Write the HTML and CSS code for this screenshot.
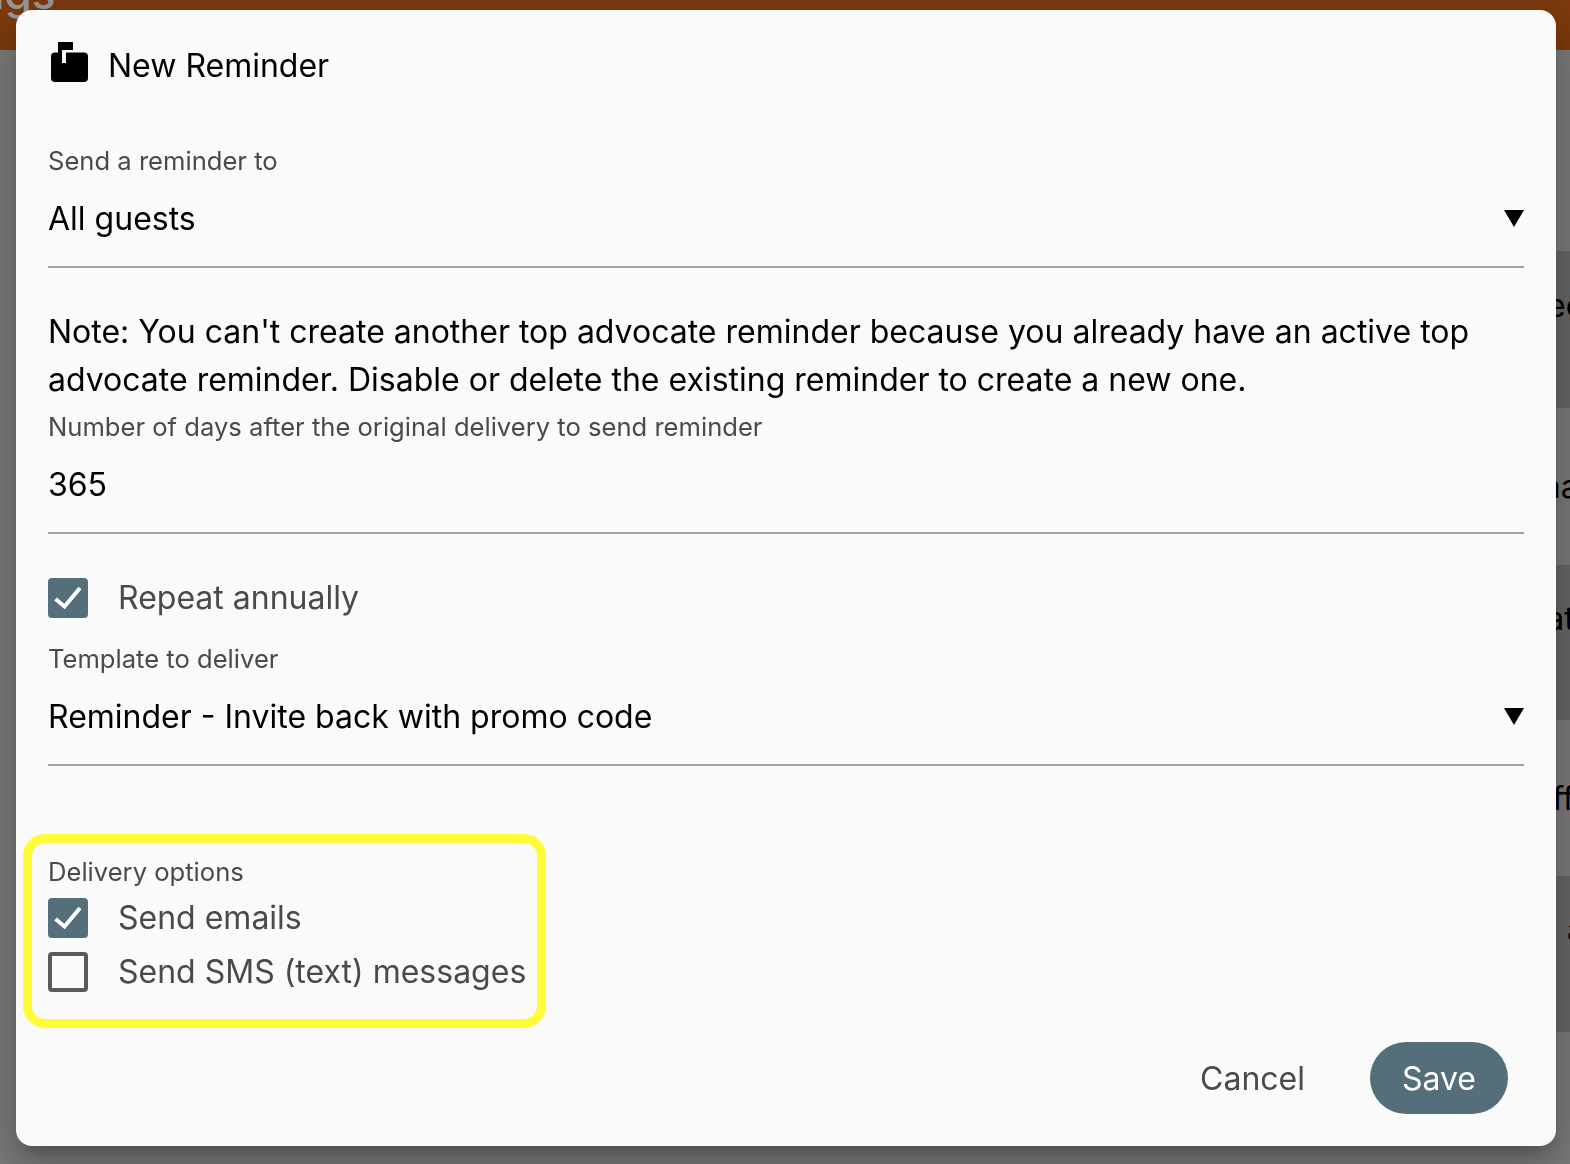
FILE: index.html
```html
<!DOCTYPE html>
<html lang="en">
<head>
<meta charset="utf-8">
<title>New Reminder</title>
<link rel="stylesheet" href="styles.css">
</head>
<body>
<div class="page">
  <header class="topbar"><span class="topbar-title">Settings</span></header>
  <div class="rows">
    <div class="row light"></div>
    <div class="row dark"><span class="cell c2">Need</span></div>
    <div class="row light"><span class="cell c3">Guna</span></div>
    <div class="row dark"><span class="cell c4">Stat</span></div>
    <div class="row light"><span class="cell c5">Staff</span></div>
    <div class="row dark"><span class="cell c6">a</span></div>
    <div class="row light"></div>
  </div>
</div>
<div class="scrim"></div>
<section class="modal">
  <h1 class="title">
    <svg class="title-icon" viewBox="0 0 37 40" aria-hidden="true"><path d="M7 0H22V8H11V21H15V10.500H33Q37 10.500 37 14.500V36Q37 40 33 40H4Q0 40 0 36V14.500Q0 10.500 4 10.500H7Z"/></svg>
    <span>New Reminder</span>
  </h1>
  <div class="field first">
    <label class="label">Send a reminder to</label>
    <div class="select"><span>All guests</span><i class="arrow"></i></div>
  </div>
  <p class="note">Note: You can't create another top advocate reminder because you already have an active top advocate reminder. Disable or delete the existing reminder to create a new one.</p>
  <div class="field days">
    <label class="label">Number of days after the original delivery to send reminder</label>
    <div class="select"><span>365</span></div>
  </div>
  <div class="check repeat">
    <span class="box on"><svg viewBox="0 0 40 40"><path d="M7.500 21L16.500 28.500L32 10"/></svg></span>
    <span>Repeat annually</span>
  </div>
  <div class="field template">
    <label class="label">Template to deliver</label>
    <div class="select"><span>Reminder - Invite back with promo code</span><i class="arrow"></i></div>
  </div>
  <div class="delivery">
    <label class="label">Delivery options</label>
    <div class="check">
      <span class="box on"><svg viewBox="0 0 40 40"><path d="M7.500 21L16.500 28.500L32 10"/></svg></span>
      <span>Send emails</span>
    </div>
    <div class="check">
      <span class="box"></span>
      <span>Send SMS (text) messages</span>
    </div>
  </div>
  <div class="actions">
    <button class="btn-text">Cancel</button>
    <button class="btn-save">Save</button>
  </div>
</section>
</body>
</html>
```
FILE: styles.css
```css
* { box-sizing: border-box; }
html, body { margin: 0; height: 100%; overflow: hidden; }
body { font-family: Inter, "Liberation Sans", sans-serif; background: #cbcbcb; color: #000; }
.page { height: 1164px; display: flex; flex-direction: column; }
.topbar { height: 50px; background: #d06117; overflow: hidden; position: relative; }
.topbar-title { position: absolute; left: -116px; top: -33px; font-size: 44px; line-height: 53px; color: #fff; font-weight: 500; white-space: nowrap; }
.rows { flex: 1; display: grid; grid-template-rows: 201px 157px 157px 155px 156px 156px 1fr; margin-left: 100px; }
.row { display: flex; align-items: center; font-size: 32px; overflow: hidden; white-space: nowrap; }
.row.light { background: #cbcbcb; }
.row.dark { background: #aaaaaa; padding-bottom: 49px; }
.cell { display: block; }
.c2 { margin-left: 1423px; }
.c3 { margin-left: 1399px; }
.c4 { margin-left: 1415px; }
.c5 { margin-left: 1403px; }
.c6 { margin-left: 1467px; }
.scrim { position: fixed; inset: 0; background: rgba(0,0,0,.4); }
.modal { position: absolute; left: 16px; top: 10px; width: 1540px; height: 1136px; background: #fafafa; border-radius: 16px; padding: 0 32px; box-shadow: 0 11px 15px -7px rgba(0,0,0,.2), 0 24px 38px 3px rgba(0,0,0,.14), 0 9px 46px 8px rgba(0,0,0,.12); }
.title { margin: 0; display: flex; align-items: center; gap: 20px; height: 110px; font-size: 32px; font-weight: 400; padding-left: 3px; }
.title-icon { width: 37px; height: 40px; fill: #000; margin-top: -6px; }
.field.first { margin-top: 27px; }
.field.days { margin-top: 9px; }
.field.template { margin-top: 21px; }
.label { display: block; font-size: 25.600px; line-height: 28px; color: #4a4a4a; }
.select { display: flex; justify-content: space-between; align-items: center; height: 93px; border-bottom: 2px solid #a3a3a3; font-size: 32px; padding-bottom: 5px; }
.arrow { width: 0; height: 0; border-left: 10px solid transparent; border-right: 10px solid transparent; border-top: 17px solid #000; margin-top: 1px; }
.note { margin: 40px 0 0; font-size: 32px; line-height: 48px; }
.check { display: flex; align-items: center; gap: 30px; height: 54px; font-size: 32px; color: #4a4a4a; }
.repeat { margin-top: 36px; }
.box { width: 40px; height: 40px; border: 4px solid #5a5a5a; border-radius: 4px; flex: none; margin-top: 2px; }
.box.on { background: #546e7a; border: 0; }
.box svg { display: block; width: 40px; height: 40px; fill: none; stroke: #fff; stroke-width: 4; }
.delivery { position: absolute; left: 7px; top: 824px; width: 523px; height: 194px; border: 9px solid #fffb39; border-radius: 22px; padding: 15px 0 0 16px; }
.delivery .label { margin-bottom: 4px; }
.actions { position: absolute; right: 48px; bottom: 32px; display: flex; align-items: center; gap: 65px; }
button { font: inherit; font-size: 32px; border: 0; background: none; }
.btn-text { color: #4a4a4a; padding: 0; }
.btn-save { height: 72px; width: 138px; border-radius: 36px; background: #546e7a; color: #fff; }
```
